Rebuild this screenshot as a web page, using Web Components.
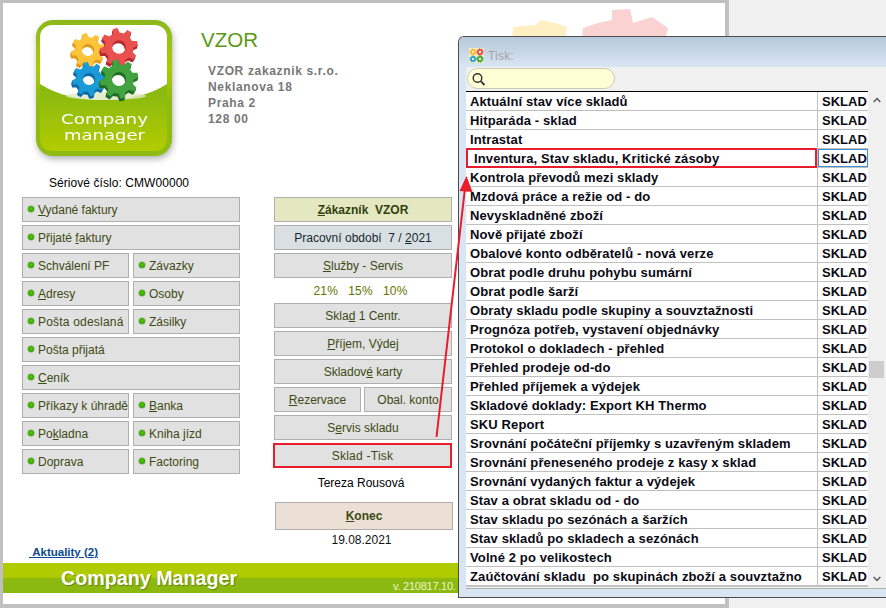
<!DOCTYPE html>
<html lang="cs"><head><meta charset="utf-8"><title>Company Manager</title>
<style>
html,body{margin:0;padding:0;width:886px;height:608px;overflow:hidden;background:#f0f0f0}
</style></head><body>
<cm-desktop>
  <cm-app>
    <cm-header slot="header" title-text="VZOR">
      <div>VZOR zakaznik s.r.o.</div><div>Neklanova 18</div><div>Praha 2</div><div>128 00</div>
    </cm-header>
    <cm-grid slot="left">
      <cm-btn dot wide><u>V</u>ydané faktury</cm-btn>
      <cm-btn dot wide>Přijaté <u>f</u>aktury</cm-btn>
      <cm-btn dot>Schválení PF</cm-btn><cm-btn dot>Závazky</cm-btn>
      <cm-btn dot><u>A</u>dresy</cm-btn><cm-btn dot>Osoby</cm-btn>
      <cm-btn dot style="letter-spacing:.2px">Pošta odeslaná</cm-btn><cm-btn dot>Zásilky</cm-btn>
      <cm-btn dot wide>Pošta přijatá</cm-btn>
      <cm-btn dot wide><u>C</u>eník</cm-btn>
      <cm-btn dot>Příkazy k úhradě</cm-btn><cm-btn dot><u>B</u>anka</cm-btn>
      <cm-btn dot>Po<u>k</u>ladna</cm-btn><cm-btn dot>Kniha jízd</cm-btn>
      <cm-btn dot>Doprava</cm-btn><cm-btn dot>Factoring</cm-btn>
    </cm-grid>
    <cm-grid slot="right">
      <cm-btn wide center variant="customer"><u>Z</u>ákazník&nbsp; VZOR</cm-btn>
      <cm-btn wide center variant="period">Pracovní období&nbsp; 7 / <u>2</u>021</cm-btn>
      <cm-btn wide center><u>S</u>lužby - Servis</cm-btn>
      <cm-note variant="rates">21%&nbsp;&nbsp; 15%&nbsp;&nbsp; 10%</cm-note>
      <cm-btn wide center>Skla<u>d</u> 1 Centr.</cm-btn>
      <cm-btn wide center><u>P</u>říjem, Výdej</cm-btn>
      <cm-btn wide center>Skladov<u>é</u> karty</cm-btn>
      <cm-btn center><u>R</u>ezervace</cm-btn><cm-btn center>Obal. konto</cm-btn>
      <cm-btn wide center>S<u>e</u>rvis skladu</cm-btn>
      <cm-btn wide center variant="marked">Sklad -Tisk</cm-btn>
      <cm-note variant="user">Tereza Rousová</cm-note>
      <cm-btn wide center variant="exit"><u>K</u>onec</cm-btn>
      <cm-note variant="date">19.08.2021</cm-note>
    </cm-grid>
  </cm-app>
  <cm-dialog>
    <cm-row>Aktuální stav více skladů</cm-row>
    <cm-row>Hitparáda - sklad</cm-row>
    <cm-row>Intrastat</cm-row>
    <cm-row marked>Inventura, Stav skladu, Kritické zásoby</cm-row>
    <cm-row>Kontrola převodů mezi sklady</cm-row>
    <cm-row>Mzdová práce a režie od - do</cm-row>
    <cm-row>Nevyskladněné zboží</cm-row>
    <cm-row>Nově přijaté zboží</cm-row>
    <cm-row>Obalové konto odběratelů - nová verze</cm-row>
    <cm-row>Obrat podle druhu pohybu sumární</cm-row>
    <cm-row>Obrat podle šarží</cm-row>
    <cm-row>Obraty skladu podle skupiny a souvztažnosti</cm-row>
    <cm-row>Prognóza potřeb, vystavení objednávky</cm-row>
    <cm-row>Protokol o dokladech - přehled</cm-row>
    <cm-row>Přehled prodeje od-do</cm-row>
    <cm-row>Přehled příjemek a výdejek</cm-row>
    <cm-row>Skladové doklady: Export KH Thermo</cm-row>
    <cm-row>SKU Report</cm-row>
    <cm-row>Srovnání počáteční příjemky s uzavřeným skladem</cm-row>
    <cm-row>Srovnání přeneseného prodeje z kasy x sklad</cm-row>
    <cm-row>Srovnání vydaných faktur a výdejek</cm-row>
    <cm-row>Stav a obrat skladu od - do</cm-row>
    <cm-row>Stav skladu po sezónách a šaržích</cm-row>
    <cm-row>Stav skladů po skladech a sezónách</cm-row>
    <cm-row>Volné 2 po velikostech</cm-row>
    <cm-row>Zaúčtování skladu&nbsp; po skupinách zboží a souvztažno</cm-row>
  </cm-dialog>
</cm-desktop>
<script>
function gearPath(cx,cy,r,n,hole){
  const inner=r*0.76,pts=[];
  for(let i=0;i<n;i++){
    const a=(i/n)*Math.PI*2-0.2,s=Math.PI*2/n;
    const p=(rad,ang)=>(cx+rad*Math.cos(ang)).toFixed(2)+' '+(cy+rad*Math.sin(ang)).toFixed(2);
    pts.push(p(inner,a-s*.30),p(r,a-s*.16),p(r,a+s*.16),p(inner,a+s*.30));
  }
  const h=r*hole;
  return 'M'+pts.join('L')+'Z'+`M${cx-h} ${cy}a${h} ${h} 0 1 0 ${h*2} 0a${h} ${h} 0 1 0 ${-h*2} 0Z`;
}
function gear(cx,cy,r,col,dark,depth){
  const d=gearPath(cx,cy,r,8,.36);
  let s='';
  for(let i=depth;i>0;i--) s+=`<path fill-rule="evenodd" fill="${dark}" d="${d}" transform="translate(${-i*.3} ${i})"/>`;
  return s+`<path fill-rule="evenodd" fill="${col}" d="${d}"/>`;
}
function define(name,css,html,extra){
  const t=document.createElement('template');
  t.innerHTML=`<style>${css}</style>${html}`;
  customElements.define(name,class extends HTMLElement{
    constructor(){super();this.attachShadow({mode:'open'}).appendChild(t.content.cloneNode(true));}
    connectedCallback(){extra&&extra(this)}
  });
}
const FONT='"Liberation Sans",Arial,sans-serif';

define('cm-desktop',`:host{display:block;position:relative;width:886px;height:608px;overflow:hidden;background:#f0f0f0;font-family:${FONT}}
  svg{position:absolute;left:0;top:0;pointer-events:none}`,
 `<slot></slot><svg width="886" height="608"><line x1="436.5" y1="437" x2="465" y2="188" stroke="#e81c2c" stroke-width="2"/><polygon points="466.5,176 459.5,191 472.5,192" fill="#e81c2c"/></svg>`);

define('cm-app',`:host{display:block;box-sizing:border-box;width:729px;height:608px;background:#fff;position:relative;
   border:solid #c0c0c0;border-width:3px 4px 4px 3px;overflow:hidden}
  .ghost{position:absolute;left:-3px;top:-3px}
  .wrap{position:relative;display:flex;flex-direction:column;height:100%}
  .serial{margin:20px 0 0 46px;height:13px;line-height:13px;font-size:12px;color:#000;letter-spacing:.06px;flex:none}
  .cols{display:flex;gap:34px;padding:7px 0 0 19px;flex:1;min-height:0;align-items:flex-start}
  .foot{flex:none;padding-bottom:11px}
  a{display:inline-block;margin-left:24px;font:bold 11.5px ${FONT};color:#0b4a8c;text-decoration:underline;line-height:14px;padding-left:3px;text-indent:-1px}
  .bar{margin-top:3px;height:30px;display:flex;justify-content:space-between;align-items:flex-end;
    background:linear-gradient(#b0cb00 0,#b0cb00 14px,#9cc209 15px,#8cb90f 16px,#8cb90f 100%);color:#fff}
  .bar b{font-size:19.7px;line-height:30px;margin-left:58px;align-self:center;text-shadow:1px 1px 1px rgba(60,80,0,.5)}
  .bar span{font-size:11px;letter-spacing:-.25px;line-height:14px;position:absolute;left:390px;bottom:11px;color:#eef5d0}`,
 `<svg class="ghost" width="722" height="60">
    <polygon fill="#fff0c4" points="512,40 513,27 535,25 541,20 555,23 567,27 565,40"/>
    <polygon fill="#fad2d2" points="582,40 583,28 598,23 612,20 612,10 630,9 633,23 652,17 668,28 665,40"/>
  </svg>
  <div class="wrap">
   <slot name="header"></slot>
   <div class="serial">Sériové číslo: CMW00000</div>
   <div class="cols"><slot name="left"></slot><slot name="right"></slot></div>
   <div class="foot"><a>&nbsp;Aktuality (2)</a>
     <div class="bar"><b>Company Manager</b><span>v. 210817.10.</span></div></div>
  </div>`);

define('cm-header',`:host{display:flex;padding:17px 0 0 33px;height:137px;color:#777;flex:none}
  .info{margin-left:29px}
  h1{margin:0;font:normal 20.5px/24px ${FONT};color:#5a9a12;padding-top:8px}
  ::slotted(div){font-size:12px;line-height:16px;font-weight:bold;letter-spacing:.65px}
  .addr{margin:11px 0 0 7px}`,
 `<cm-logo></cm-logo><div class="info"><h1>VZOR</h1><div class="addr"><slot></slot></div></div>`);

define('cm-logo',`:host{display:block;width:136px;height:137px;flex:none}
  svg{display:block;overflow:visible;filter:drop-shadow(1px 3px 3px rgba(0,0,0,.3))}
  text{font-family:"DejaVu Sans",sans-serif;fill:#fff;font-size:13.7px}`,
 `<svg width="136" height="137" viewBox="36 20 136 137">
   <defs>
    <linearGradient id="o" x1="0" y1="0" x2="0" y2="1"><stop offset="0" stop-color="#8cb81a"/><stop offset=".35" stop-color="#a9cb00"/><stop offset=".6" stop-color="#8fba10"/><stop offset="1" stop-color="#8fbc12"/></linearGradient>
    <linearGradient id="l" x1="0" y1="0" x2="0" y2="1"><stop offset="0" stop-color="#86b612"/><stop offset=".55" stop-color="#8cba10"/><stop offset="1" stop-color="#b2cc00"/></linearGradient>
   </defs>
   <rect x="36" y="20" width="136" height="136" rx="17" fill="url(#o)"/>
   <rect x="40" y="25" width="127" height="126" rx="12" fill="url(#l)"/>
   <path d="M40 37a12 12 0 0 1 12-12h103a12 12 0 0 1 12 12v47q-25 16-63.500 16T40 84Z" fill="#fff"/>
   <ellipse cx="106" cy="96" rx="40" ry="4" fill="#dfe8c0" opacity=".8"/>
   ${gear(88,50,17,'#fdc43a','#e09a1a',3)}
   ${gear(89,79,17,'#1b9ad8','#106aa8',3)}
   ${gear(119,47,19,'#ea504e','#b52a30',3)}
   ${gear(119,79,19.500,'#43a240','#1f6d25',3)}
   <text x="61" y="123.500" textLength="87" lengthAdjust="spacingAndGlyphs">Company</text>
   <text x="64" y="139.500" textLength="81" lengthAdjust="spacingAndGlyphs">manager</text>
  </svg>`);

define('cm-grid',`:host{display:grid;grid-auto-rows:min-content;gap:3px 4px}`,`<slot></slot>`,
 el=>{const left=el.getAttribute('slot')==='left';
   el.style.width=left?'218px':'178px';
   el.style.gridTemplateColumns=left?'107px 107px':'87px 88px';
   if(!left) el.style.columnGap='3px';});

define('cm-btn',`:host{display:flex;align-items:center;box-sizing:border-box;height:25px;border:1px solid #aeaeae;background:#e1e1e1;
    color:#3c4a14;font-size:12px;letter-spacing:0;white-space:nowrap}
  :host([wide]){grid-column:1/-1}
  :host([center]){justify-content:center}
  :host([dot]){padding-left:5px}
  .d{display:none;width:6px;height:6px;border-radius:50%;margin:-2px 4px 0 0;flex:none;background:radial-gradient(circle at 50% 45%,#52d000 0,#3aa600 55%,#2f7a10 100%);box-shadow:0 0 0 .5px #7aa86a}
  :host([dot]) .d{display:block}
  :host([variant=customer]){background:#e3e8c1;font-weight:bold;color:#333f10}
  :host([variant=period]){background:#d9e0e4;color:#16282c}
  :host([variant=marked]){border:2px solid #e81c2c;margin-left:-1px;letter-spacing:.25px}
  :host([variant=exit]){background:#ecdfd5;font-weight:bold;height:28px;margin:0 -1px 0 1px;color:#3c4a14}`,
 `<i class="d"></i><span><slot></slot></span>`);

define('cm-note',`:host{display:block;grid-column:1/-1;text-align:center;height:19px;line-height:19px;font-size:12px;color:#000}
  :host([variant=rates]){color:#5f7300;letter-spacing:.12px;line-height:20px;padding-right:5px}
  :host([variant=user]){margin:3px 0 6px;padding-right:4px}
  :host([variant=date]){margin-top:-2px;padding-right:3px;color:#111}`,`<slot></slot>`);

define('cm-dialog',`:host{position:absolute;left:458px;top:36px;right:0;height:562px;box-sizing:border-box;border:solid #4d4d4d;border-width:1px 0 1px 1px;border-top-left-radius:6px;
     background:#d8e6f4;overflow:hidden;display:flex;flex-direction:column}
  .title{height:30px;flex:none;display:flex;align-items:center;gap:4px;padding:7px 0 0 10px;box-sizing:border-box;background:linear-gradient(#b6c8db,#d9e6f3);color:#a2a2a2;font-size:12px;letter-spacing:.2px}
  .title svg{background:#f5eec4}
  .body{margin-left:7px;background:#f0f0f0;flex:none;display:flex;flex-direction:column}
  .search{height:24px;flex:none;display:flex;align-items:flex-start;box-sizing:border-box;padding:1px 0 0 1px}
  .pill{width:148px;height:21px;box-sizing:border-box;border:1px solid #c9c9b4;border-radius:11px;background:#ffffd6;padding:3px 0 0 4px}
  .pill svg{display:block}
  .main{display:flex;flex:none;height:497px}
  .table{width:402px;border-top:1px solid #000;background:#fff;box-sizing:border-box;height:496px;border-bottom:1px solid #c4c4c4}
  .sb{width:18px;position:relative;flex:none}
  .sb svg{position:absolute;left:5px}
  .thumb{position:absolute;left:1px;width:15px;top:270px;height:17px;background:#cdcdcd}
  .b{flex:none;height:1px;background:#b0b0b0}`,
 `<div class="title"><svg width="15" height="15" viewBox="0 0 15 15">${gear(4,4,3.6,'#f6b52a','#f6b52a',0)}${gear(11,4,3.8,'#e8484a','#e8484a',0)}${gear(4,11,3.6,'#1b9ad8','#1b9ad8',0)}${gear(11,11,3.8,'#3ba03a','#3ba03a',0)}</svg><span>Tisk:</span></div>
 <div class="body"><div class="search"><div class="pill"><svg width="14" height="14" viewBox="0 0 14 14" fill="none" stroke="#333" stroke-width="1.400"><circle cx="5.500" cy="6" r="4.300"/><path d="M8.700 9.200 12.500 13" stroke-width="1.800"/></svg></div></div>
 <div class="main"><div class="table"><slot></slot></div>
 <div class="sb"><svg style="top:6px" width="8" height="6" viewBox="0 0 8 6" fill="none" stroke="#5a5a5a" stroke-width="1.500"><path d="M.7 5 4 1.500 7.300 5"/></svg>
 <div class="thumb"></div>
 <svg style="top:485px" width="8" height="6" viewBox="0 0 8 6" fill="none" stroke="#5a5a5a" stroke-width="1.500"><path d="M.7 1 4 4.500 7.300 1"/></svg></div></div>
 <div class="b"></div></div>`);

define('cm-row',`:host{display:flex;box-sizing:border-box;height:19px;border-bottom:1px solid #c0c0c0;font:bold 13px/19px ${FONT};color:#0a0a14;letter-spacing:.12px;white-space:nowrap}
  .n{flex:none;width:352px;box-sizing:border-box;padding-left:4px;border-right:1px solid #c0c0c0;overflow:hidden;position:relative}
  .s{flex:none;width:50px;box-sizing:border-box;padding-left:4px;letter-spacing:0}
  :host([marked]) .n{padding-left:8px;overflow:visible}
  :host([marked]) .n::after{content:"";position:absolute;left:0;right:0;top:-1px;bottom:-1px;border:2px solid #e81c2c;box-sizing:border-box}
  :host([marked]) .s{outline:1px solid #3a8fd8;outline-offset:-1px}`,
 `<div class="n"><slot></slot></div><div class="s">SKLAD</div>`);
</script>
</body></html>
